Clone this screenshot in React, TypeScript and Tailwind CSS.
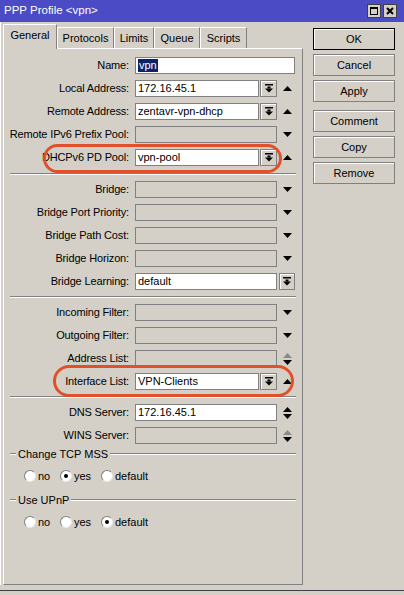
import React from "react";

type Side = "up" | "down" | "both" | "grayboth" | "none";

function TriUp({ gray }: { gray?: boolean }) {
  return (
    <svg width="9" height="5" viewBox="0 0 9 5" className="block">
      <path d="M4.5 0 L9 5 L0 5 Z" fill={gray ? "#8a8a8a" : "#000"} />
    </svg>
  );
}

function TriDown() {
  return (
    <svg width="9" height="5" viewBox="0 0 9 5" className="block">
      <path d="M0 0 L9 0 L4.5 5 Z" fill="#000" />
    </svg>
  );
}

function SideArrows({ side }: { side: Side }) {
  return (
    <div className="ml-[1px] w-[18px] flex flex-col items-center justify-center gap-[2px]">
      {side === "up" && <TriUp />}
      {side === "down" && <TriDown />}
      {side === "both" && (
        <>
          <TriUp />
          <TriDown />
        </>
      )}
      {side === "grayboth" && (
        <>
          <TriUp gray />
          <TriDown />
        </>
      )}
    </div>
  );
}

function DropIcon() {
  return (
    <svg width="8" height="9" viewBox="0 0 8 9" className="block">
      <rect x="0" y="0" width="8" height="1.5" fill="#000" />
      <rect x="2.5" y="2.5" width="3" height="2" fill="#000" />
      <path d="M0 4.5 L8 4.5 L4 8.5 Z" fill="#000" />
    </svg>
  );
}

function DropBtn({ w = "w-[17px]", ml = "ml-[1px]" }: { w?: string; ml?: string }) {
  return (
    <div
      className={`${w} ${ml} h-[17px] flex items-center justify-center bg-[#d4d0c8] border border-[#808080] shadow-[inset_1px_1px_0_#fff]`}
    >
      <DropIcon />
    </div>
  );
}

function TextBox({ w, children }: { w: string; children?: React.ReactNode }) {
  return (
    <div
      className={`${w} h-[17px] bg-white border border-[#808080] pl-[2px] flex items-center whitespace-nowrap overflow-hidden`}
    >
      {children}
    </div>
  );
}

function Disabled() {
  return <div className="w-[142px] h-[17px] bg-[#d4d0c8] border border-[#808080]" />;
}

function Combo({ value }: { value: string }) {
  return (
    <div className="flex">
      <TextBox w="w-[124px]">{value}</TextBox>
      <DropBtn />
    </div>
  );
}

function Row({
  label,
  side = "none",
  children,
}: {
  label: string;
  side?: Side;
  children: React.ReactNode;
}) {
  return (
    <div className="flex h-[23px] items-center">
      <div className="w-[125px] text-right whitespace-nowrap tracking-[-0.15px]">{label}</div>
      <div className="ml-[6px] flex items-center">{children}</div>
      {side !== "none" && <SideArrows side={side} />}
    </div>
  );
}

function Separator({ h }: { h: string }) {
  return (
    <div className={`${h} mx-[6px] flex items-center`}>
      <div className="w-full border-t border-[#808080] border-b border-b-white" />
    </div>
  );
}

function GroupHeader({ title }: { title: string }) {
  return (
    <div className="h-[14px] mx-[6px] flex items-center">
      <div className="w-[6px] border-t border-[#808080] border-b border-b-white" />
      <span className="px-[2px] whitespace-nowrap">{title}</span>
      <div className="flex-1 border-t border-[#808080] border-b border-b-white" />
    </div>
  );
}

function Radio({ checked, label, w }: { checked?: boolean; label: string; w: string }) {
  return (
    <div className={`${w} flex items-center`}>
      <div className="w-[12px] h-[12px] rounded-full bg-white border border-t-[#808080] border-l-[#808080] border-r-[#e8e8e8] border-b-[#e8e8e8] flex items-center justify-center">
        {checked && <div className="w-[4px] h-[4px] rounded-full bg-black" />}
      </div>
      <span className="ml-[2px]">{label}</span>
    </div>
  );
}

function RadioRow({ value }: { value: "no" | "yes" | "default" }) {
  return (
    <div className="h-[30px] pl-[20px] flex items-center">
      <Radio w="w-[36px]" label="no" checked={value === "no"} />
      <Radio w="w-[41px]" label="yes" checked={value === "yes"} />
      <Radio w="w-[60px]" label="default" checked={value === "default"} />
    </div>
  );
}

function Tab({ label, w, active }: { label: string; w: string; active?: boolean }) {
  return (
    <div
      className={`${w} ${
        active ? "h-[25px] -mb-[1px] relative z-10 pb-[3px]" : "h-[21px]"
      } bg-[#d4d0c8] border-t border-l border-white border-r border-r-[#808080] flex items-center justify-center whitespace-nowrap`}
    >
      {label}
    </div>
  );
}

function ActionButton({ label, primary, mt }: { label: string; primary?: boolean; mt: string }) {
  return (
    <div
      className={`${mt} h-[22px] w-[82px] flex items-center justify-center border ${
        primary ? "border-black" : "border-[#808080]"
      } shadow-[inset_1px_1px_0_#fff]`}
    >
      {label}
    </div>
  );
}

export default function App() {
  return (
    <div className="relative w-[404px] h-[595px] bg-[#d4d0c8] text-[11px] leading-none text-black font-['Liberation_Sans',sans-serif] overflow-hidden">
      {/* title bar */}
      <div className="h-[22px] bg-[#4b4bc6] flex items-center pl-[4px] pr-[7px]">
        <span className="flex-1 text-white text-[11.5px]">PPP Profile &lt;vpn&gt;</span>
        <div className="flex gap-[2px]">
          <div className="w-[14px] h-[14px] bg-[#d4d0c8] border border-[#404040] flex items-center justify-center">
            <div className="w-[8px] h-[8px] border border-black border-t-2" />
          </div>
          <div className="w-[14px] h-[14px] bg-[#d4d0c8] border border-[#404040] flex items-center justify-center">
            <svg width="8" height="8" viewBox="0 0 8 8">
              <path d="M1 1 L7 7 M7 1 L1 7" stroke="#000" strokeWidth="2" />
            </svg>
          </div>
        </div>
      </div>

      <div className="flex border-l border-white">
        {/* tabs and form */}
        <div className="ml-[2px] w-[300px]">
          <div className="h-[26px] flex items-end">
            <Tab label="General" w="w-[54px]" active />
            <Tab label="Protocols" w="w-[57px]" />
            <Tab label="Limits" w="w-[40px]" />
            <Tab label="Queue" w="w-[46px]" />
            <Tab label="Scripts" w="w-[47px]" />
          </div>
          <div className="h-[537px] border-t border-l border-white border-r border-b border-r-[#808080] border-b-[#808080] pt-[5px]">
            <Row label="Name:">
              <TextBox w="w-[160px]">
                <span className="bg-[#0a246a] text-white px-[1px] py-[1px]">vpn</span>
              </TextBox>
            </Row>
            <Row label="Local Address:" side="up">
              <Combo value="172.16.45.1" />
            </Row>
            <Row label="Remote Address:" side="up">
              <Combo value="zentavr-vpn-dhcp" />
            </Row>
            <Row label="Remote IPv6 Prefix Pool:" side="down">
              <Disabled />
            </Row>
            <Row label="DHCPv6 PD Pool:" side="up">
              <Combo value="vpn-pool" />
            </Row>

            <Separator h="h-[9px]" />

            <Row label="Bridge:" side="down">
              <Disabled />
            </Row>
            <Row label="Bridge Port Priority:" side="down">
              <Disabled />
            </Row>
            <Row label="Bridge Path Cost:" side="down">
              <Disabled />
            </Row>
            <Row label="Bridge Horizon:" side="down">
              <Disabled />
            </Row>
            <Row label="Bridge Learning:">
              <TextBox w="w-[142px]">default</TextBox>
              <DropBtn w="w-[16px]" ml="ml-[2px]" />
            </Row>

            <Separator h="h-[8px]" />

            <Row label="Incoming Filter:" side="down">
              <Disabled />
            </Row>
            <Row label="Outgoing Filter:" side="down">
              <Disabled />
            </Row>
            <Row label="Address List:" side="grayboth">
              <Disabled />
            </Row>
            <Row label="Interface List:" side="up">
              <Combo value="VPN-Clients" />
            </Row>

            <Separator h="h-[8px]" />

            <Row label="DNS Server:" side="both">
              <TextBox w="w-[142px]">172.16.45.1</TextBox>
            </Row>
            <Row label="WINS Server:" side="grayboth">
              <Disabled />
            </Row>

            <GroupHeader title="Change TCP MSS" />
            <RadioRow value="yes" />
            <div className="mt-[2px]">
              <GroupHeader title="Use UPnP" />
            </div>
            <RadioRow value="default" />
          </div>
        </div>

        {/* dialog buttons */}
        <div className="ml-[10px] pt-[6px] flex flex-col">
          <ActionButton label="OK" primary mt="mt-0" />
          <ActionButton label="Cancel" mt="mt-[4px]" />
          <ActionButton label="Apply" mt="mt-[4px]" />
          <ActionButton label="Comment" mt="mt-[8px]" />
          <ActionButton label="Copy" mt="mt-[4px]" />
          <ActionButton label="Remove" mt="mt-[4px]" />
        </div>
      </div>

      <div className="mt-[5px] h-[1px] bg-[#404040]" />

      {/* highlight rings */}
      <div className="absolute left-[43px] top-[144px] w-[239px] h-[29px] rounded-full border-[3px] border-[#e0502a]" />
      <div className="absolute left-[53px] top-[365px] w-[241px] h-[32px] rounded-full border-[3px] border-[#e0502a]" />
    </div>
  );
}
